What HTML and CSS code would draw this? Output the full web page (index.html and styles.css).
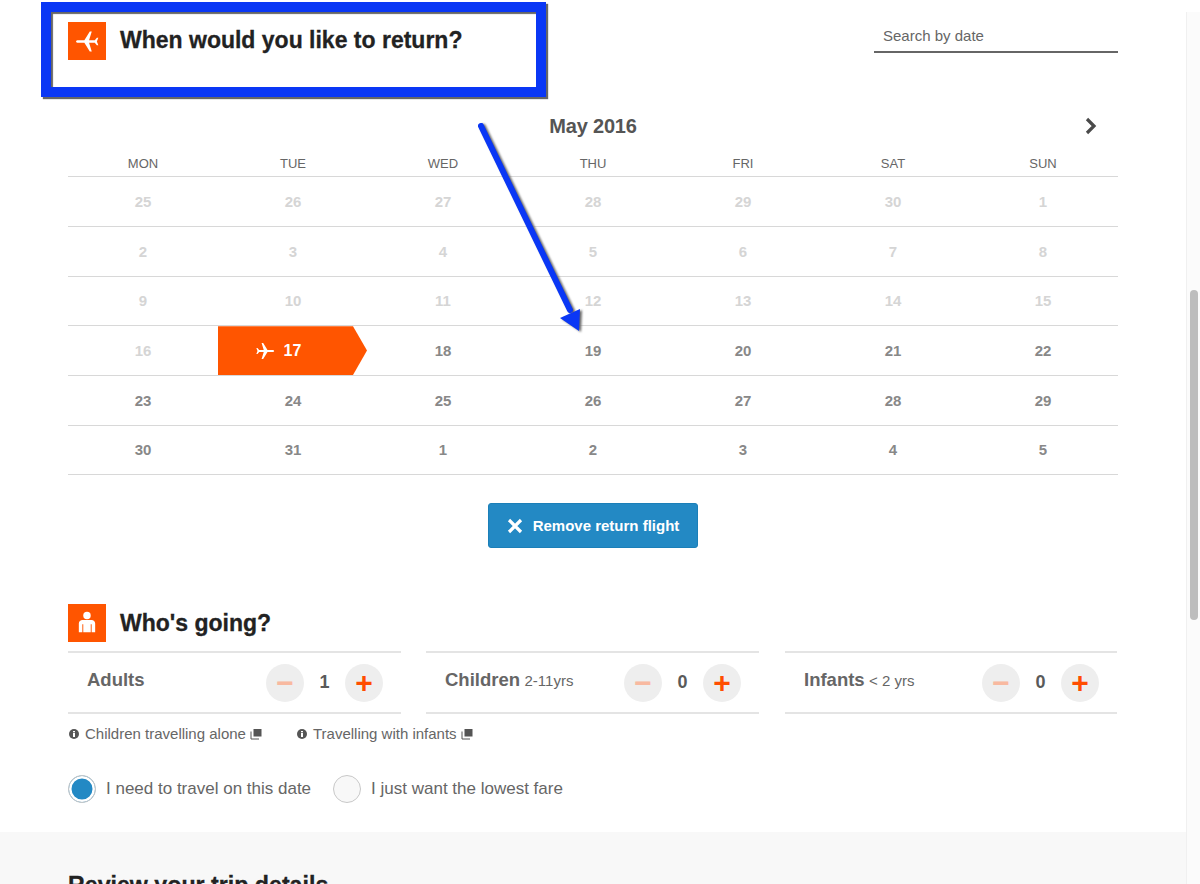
FILE: index.html
```html
<!DOCTYPE html>
<html lang="en">
<head>
<meta charset="utf-8">
<title>When would you like to return?</title>
<link rel="stylesheet" href="styles.css">
</head>
<body>
<main class="main">
  <header class="head">
    <div class="title-wrap">
      <span class="icon-box">
        <svg class="plane-left" viewBox="0 0 24 24" width="25" height="25"><path fill="#fff" d="M23 12c0-.8-1-1.300-2-1.300h-6L9.800 2.500H7.900l2.600 8.200H5L3 8.300H1.600L3 12l-1.400 3.700H3L5 13.300h5.500l-2.600 8.200h1.900L15 13.300h6c1 0 2-.5 2-1.300z"/></svg>
      </span>
      <h1 class="title">When would you like to return?</h1>
    </div>
    <div class="search">Search by date</div>
  </header>

  <section class="calendar">
    <div class="month">
      <h2 class="month-name">May 2016</h2>
      <svg class="next" viewBox="0 0 14 18" width="14" height="18"><path d="M3 2l7 7-7 7" fill="none" stroke="#4a4a4a" stroke-width="3.200"/></svg>
    </div>
    <div class="days weekdays">
      <div>MON</div><div>TUE</div><div>WED</div><div>THU</div><div>FRI</div><div>SAT</div><div>SUN</div>
    </div>
    <div class="days dates">
      <div class="off">25</div><div class="off">26</div><div class="off">27</div><div class="off">28</div><div class="off">29</div><div class="off">30</div><div class="off">1</div>
      <div class="off">2</div><div class="off">3</div><div class="off">4</div><div class="off">5</div><div class="off">6</div><div class="off">7</div><div class="off">8</div>
      <div class="off">9</div><div class="off">10</div><div class="off">11</div><div class="off">12</div><div class="off">13</div><div class="off">14</div><div class="off">15</div>
      <div class="off">16</div>
      <div class="selected-cell"><span class="selected">
        <svg viewBox="0 0 24 24" width="20" height="20"><path fill="#fff" d="M23 12c0-.8-1-1.300-2-1.300h-6L9.800 2.500H7.900l2.600 8.200H5L3 8.300H1.600L3 12l-1.400 3.700H3L5 13.300h5.500l-2.600 8.200h1.900L15 13.300h6c1 0 2-.5 2-1.300z"/></svg>
        17</span></div>
      <div>18</div><div>19</div><div>20</div><div>21</div><div>22</div>
      <div>23</div><div>24</div><div>25</div><div>26</div><div>27</div><div>28</div><div>29</div>
      <div>30</div><div>31</div><div>1</div><div>2</div><div>3</div><div>4</div><div>5</div>
    </div>
    <div class="actions">
      <button class="remove" type="button">
        <svg viewBox="0 0 16 16" width="16" height="16"><path d="M2 2l12 12M14 2L2 14" stroke="#fff" stroke-width="3.200" fill="none"/></svg>
        Remove return flight
      </button>
    </div>
  </section>

  <section class="going">
    <div class="going-head">
      <span class="icon-box">
        <svg viewBox="0 0 24 24" width="28" height="28"><circle cx="12" cy="5.500" r="3.200" fill="#fff"/><path fill="#fff" d="M5 12.500c0-2 1.500-3 3-3h8c1.500 0 3 1 3 3V20h-3v-7h-.8v7H8.800v-7H8v7H5z"/></svg>
      </span>
      <h2 class="going-title">Who's going?</h2>
    </div>
    <div class="counters">
      <div class="counter">
        <div class="counter-label"><b>Adults</b></div>
        <div class="stepper"><span class="step minus">−</span><span class="count">1</span><span class="step plus">+</span></div>
      </div>
      <div class="counter">
        <div class="counter-label"><b>Children</b> <small>2-11yrs</small></div>
        <div class="stepper"><span class="step minus">−</span><span class="count">0</span><span class="step plus">+</span></div>
      </div>
      <div class="counter">
        <div class="counter-label"><b>Infants</b> <small>&lt; 2 yrs</small></div>
        <div class="stepper"><span class="step minus">−</span><span class="count">0</span><span class="step plus">+</span></div>
      </div>
    </div>
    <div class="infos">
      <span class="info">
        <svg viewBox="0 0 10 10" width="10" height="10"><circle cx="5" cy="5" r="5" fill="#555"/><rect x="4" y="4" width="2" height="4" fill="#fff"/><rect x="4" y="2" width="2" height="1.300" fill="#fff"/></svg>
        Children travelling alone
        <svg viewBox="0 0 12 12" width="12" height="12"><rect x="3.500" y="1" width="8" height="7.500" fill="#555"/><path d="M1 3.500v7.500h8" fill="none" stroke="#555"/></svg>
      </span>
      <span class="info">
        <svg viewBox="0 0 10 10" width="10" height="10"><circle cx="5" cy="5" r="5" fill="#555"/><rect x="4" y="4" width="2" height="4" fill="#fff"/><rect x="4" y="2" width="2" height="1.300" fill="#fff"/></svg>
        Travelling with infants
        <svg viewBox="0 0 12 12" width="12" height="12"><rect x="3.500" y="1" width="8" height="7.500" fill="#555"/><path d="M1 3.500v7.500h8" fill="none" stroke="#555"/></svg>
      </span>
    </div>
    <div class="radios">
      <label class="radio"><span class="dot checked"></span>I need to travel on this date</label>
      <label class="radio"><span class="dot"></span>I just want the lowest fare</label>
    </div>
  </section>

  <section class="review">
    <h2 class="review-title">Review your trip details</h2>
  </section>
</main>

<div class="scrollbar"><div class="thumb"></div></div>
<div class="callout"></div>
<svg class="arrow" viewBox="0 0 120 220" width="120" height="220">
  <path d="M6 6L95 190" stroke="#0a37f5" stroke-width="6" stroke-linecap="round" fill="none"/>
  <path d="M85 198L105 189L104 211z" fill="#0a37f5"/>
</svg>
</body>
</html>
```
FILE: styles.css
```css
* { box-sizing: border-box; }
html, body { margin: 0; height: 884px; overflow: hidden; background: #fff; }
body { font-family: "Liberation Sans", Arial, sans-serif; color: #555; position: relative; }
h1, h2 { margin: 0; }

.main { width: 1186px; height: 884px; overflow: hidden; }

.head {
  display: flex;
  justify-content: space-between;
  align-items: flex-start;
  padding: 22px 68px 0;
  height: 107px;
}
.title-wrap { display: flex; gap: 14px; }
.icon-box {
  width: 38px; height: 38px;
  background: #ff5500;
  display: flex; align-items: center; justify-content: center;
  flex: none;
}
.plane-left { transform: scaleX(-1); }
.title { font-size: 23px; line-height: 37px; color: #222; -webkit-text-stroke: 0.3px #222; }
.search {
  width: 244px; height: 31px;
  padding: 4px 9px 0;
  font-size: 15px; line-height: 20px; color: #666;
  border-bottom: 2px solid #666;
}

.calendar { padding: 0 68px; }
.month { position: relative; height: 38px; display: flex; align-items: center; justify-content: center; }
.month-name { font-size: 20px; line-height: 38px; color: #555; letter-spacing: -0.2px; }
.next { position: absolute; right: 20px; top: 10px; }

.days { display: grid; grid-template-columns: repeat(7, 150px); text-align: center; }
.weekdays { height: 32.3px; border-bottom: 1px solid #d8d8d8; font-size: 13px; line-height: 37px; color: #666; width: 1050px; }
.dates { grid-auto-rows: 49.67px; width: 1050px; }
.dates > div {
  border-bottom: 1px solid #d8d8d8;
  font-size: 15px; font-weight: 700; color: #888;
  display: flex; align-items: center; justify-content: center;
}
.dates > .off { color: #d5d5d5; }
.dates > .selected-cell { align-items: stretch; }
.selected {
  flex: 1;
  background: #ff5500; color: #fff;
  clip-path: polygon(0 0, 135px 0, 149px 50%, 135px 100%, 0 100%);
  display: flex; align-items: center; justify-content: center; gap: 9px;
  padding-right: 30px;
  padding-top: 1px;
  font-size: 16px;
}

.actions { display: flex; justify-content: center; padding-top: 28px; }
.remove {
  width: 210px; height: 45px;
  display: flex; align-items: center; justify-content: center; gap: 10px;
  background: #2389c4; color: #fff;
  border: 1px solid #1b7fb8; border-radius: 3px;
  font: 700 15px "Liberation Sans", Arial, sans-serif;
}

.going { padding: 56px 68px 0; }
.going-head { display: flex; align-items: center; gap: 14px; height: 38px; }
.going-title { font-size: 23px; color: #222; -webkit-text-stroke: 0.3px #222; }
.counters { display: grid; grid-template-columns: 333px 333px 333px; column-gap: 25px; margin-top: 9px; }
.counter {
  height: 63px;
  border-top: 2px solid #e4e4e4;
  border-bottom: 2px solid #e4e4e4;
  display: flex; align-items: center; justify-content: space-between;
  padding: 0 18px 0 19px;
}
.counter:last-child { margin-left: 1px; }
.counter-label { color: #666; margin-top: -5px; }
.counter-label b { font-size: 18.5px; color: #666; }
.counter-label small { font-size: 15px; }
.stepper { display: flex; align-items: center; }
.step {
  width: 38px; height: 38px; border-radius: 50%;
  background: #eeeeee;
  display: flex; align-items: center; justify-content: center;
  font-size: 30px; font-weight: 700; line-height: 38px; color: #ff4d00;
}
.minus { color: #f8b9a0; }
.count { width: 41px; text-align: center; font-size: 18px; font-weight: 700; color: #5a5a5a; }

.infos { display: flex; gap: 35px; margin-top: 10px; height: 20px; padding-left: 1px; }
.info { display: flex; align-items: center; gap: 6px; font-size: 15px; line-height: 20px; color: #666; }
.info svg:last-child { margin-left: -2px; }

.radios { display: flex; gap: 22px; margin-top: 30px; }
.radio { display: flex; align-items: center; gap: 10px; font-size: 17px; color: #666; height: 29px; }
.dot {
  width: 28px; height: 28px; border-radius: 50%;
  border: 1px solid #c8c8c8; background: #f8f8f8;
  flex: none;
}
.dot.checked { background: #2389c4; box-shadow: inset 0 0 0 2.5px #fff; }

.review { margin-top: 29px; height: 52px; overflow: hidden; background: #f8f8f8; padding: 40px 68px 0; }
.review-title { font-size: 23.2px; line-height: 26px; color: #222; -webkit-text-stroke: 0.3px #222; }

.scrollbar {
  position: absolute; top: 12px; right: 0; bottom: 0;
  width: 14px;
  background: #fbfbfb;
  border-left: 1px solid #f0f0f0;
}
.thumb {
  position: absolute; top: 278px; left: 3px;
  width: 8px; height: 330px;
  border-radius: 4px;
  background: #bdbdbd;
}

.callout {
  position: absolute; left: 41px; top: 2px;
  width: 505px; height: 95px;
  border: 10px solid #0a37f5;
  box-shadow: 2px 2px 1px #666, inset 2px 2px 1px #666;
}
.arrow {
  position: absolute; left: 475px; top: 120px;
  filter: drop-shadow(2px 1px 1px #666);
}
```
